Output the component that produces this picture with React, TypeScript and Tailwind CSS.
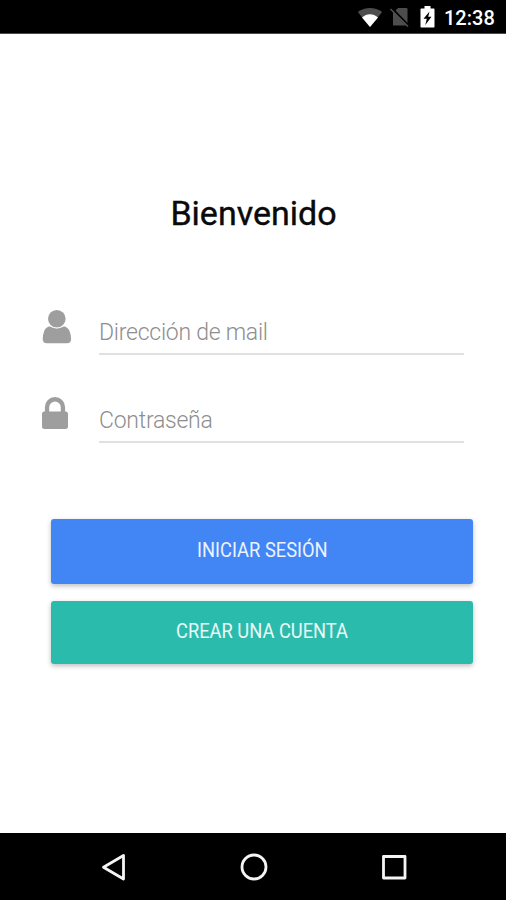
import type { ReactNode } from "react";

function StatusBar() {
  return (
    <header className="flex h-[34px] items-center justify-end border-b border-[#4a4a4a] bg-black pt-px pr-[10px]">
      <svg width="26" height="21" viewBox="0 0 26 21" className="mr-[7px]">
        <path d="M.8 5C8-.5 18-.5 25.200 5L13 20z" fill="#4d4d4d" />
        <path d="M5 10.500C9.500 6 16.500 6 21 10.500L13 20z" fill="#fff" />
      </svg>
      <svg width="20" height="20" viewBox="0 0 20 20" className="mr-[10px]">
        <path d="M8 1h8.500q1 0 1 1v16.500h-14.500V6z" fill="#4d4d4d" />
        <path d="M1.500 1.500l17 17.500" stroke="#000" strokeWidth="3" />
        <path d="M.5 2l17.500 17.500" stroke="#555" strokeWidth="1.500" />
      </svg>
      <svg width="15" height="22" viewBox="0 0 15 22" className="mr-[9px]">
        <path d="M4.500 0h6v2.500h3.300q.7 0 .7.700v17.600q0 .7-.7.700H1.200q-.7 0-.7-.7V3.200q0-.7.7-.7h3.300z" fill="#fff" />
        <path d="M9.500 5.500L3.500 12.700h3.300l-1.500 6.300 6.200-8.200H8.200z" fill="#000" />
      </svg>
      <span className="w-[52px] pt-[2px] text-[20px] leading-none font-medium text-white">12:38</span>
    </header>
  );
}

function UserIcon() {
  return (
    <svg width="30" height="35" viewBox="0 0 30 35" fill="#9e9e9e">
      <circle cx="14.800" cy="9.700" r="8.800" />
      <path d="M7.500 17.300q7.300 4.200 14.600 0q3.800 1 5.400 4.700q1.600 4 1.600 8q0 4.200-4.200 4.200H4.900q-4.200 0-4.200-4.200q0-4 1.500-8q1.500-3.700 5.300-4.700z" />
      <path d="M7.300 16.800q7.500 4.600 15 0" fill="none" stroke="#fff" strokeOpacity=".55" strokeWidth=".7" />
    </svg>
  );
}

function LockIcon() {
  return (
    <svg width="26" height="32" viewBox="320 128 1152 1408" fill="#9e9e9e">
      <path d="M640 768h512v-192q0-106-75-181t-181-75-181 75-75 181v192zm832 96v576q0 40-28 68t-68 28h-960q-40 0-68-28t-28-68v-576q0-40 28-68t68-28h32v-192q0-184 132-316t316-132 316 132 132 316v192h32q40 0 68 28t28 68z" />
    </svg>
  );
}

function Field({ icon, children }: { icon: ReactNode; children: ReactNode }) {
  return (
    <div className="flex h-[46px] items-start">
      <div className="w-[57px] shrink-0">{icon}</div>
      <label className="mt-[6px] h-10 w-[365px] border-b-2 border-[#e0e0e0] pt-1 text-[23px] leading-7 font-light tracking-[-0.25px] text-[#8e8e8e]">
        {children}
      </label>
    </div>
  );
}

export default function App() {
  return (
    <div className="flex h-[900px] w-[506px] flex-col bg-white font-[Roboto,sans-serif]">
      <StatusBar />

      <main className="flex-1">
        <h1 className="mt-[159px] pl-px text-center text-[34px] leading-10 text-[#0a0a0a] [-webkit-text-stroke:0.4px_#0a0a0a]">
          Bienvenido
        </h1>

        <form className="mt-[76px]">
          <div className="flex flex-col gap-[42px] pl-[42px]">
            <Field icon={<UserIcon />}>Dirección de mail</Field>
            <Field icon={<LockIcon />}>Contraseña</Field>
          </div>

          <div className="mt-[76px] ml-[51px] flex w-[422px] flex-col gap-[17px]">
            <button
              type="button"
              className="h-[65px] rounded-[3px] bg-[#4285f4] pb-[3px] text-[20px] text-white/90 shadow-[0_2px_5px_rgba(0,0,0,0.26)]"
            >
              <span className="inline-block scale-x-[0.915]">INICIAR SESIÓN</span>
            </button>
            <button
              type="button"
              className="h-[63px] rounded-[3px] bg-[#2bbbad] pb-[3px] text-[20px] text-white/90 shadow-[0_2px_5px_rgba(0,0,0,0.26)]"
            >
              <span className="inline-block scale-x-[0.915]">CREAR UNA CUENTA</span>
            </button>
          </div>
        </form>
      </main>

      <nav className="flex h-[67px] items-center justify-between bg-black pr-[99px] pl-[100px]">
        <svg width="26" height="30" viewBox="0 0 26 30" fill="none" stroke="#f5f5f5" strokeWidth="2.800" strokeLinejoin="round">
          <path d="M23.500 3.500v23.500L3.500 15.200z" />
        </svg>
        <svg width="28" height="28" viewBox="0 0 28 28" fill="none" stroke="#f5f5f5" strokeWidth="2.800">
          <circle cx="14" cy="14" r="12" />
        </svg>
        <svg width="26" height="26" viewBox="0 0 26 26" fill="none" stroke="#f5f5f5" strokeWidth="2.800" strokeLinejoin="round">
          <rect x="2.500" y="2.500" width="21.500" height="21.500" />
        </svg>
      </nav>
    </div>
  );
}
